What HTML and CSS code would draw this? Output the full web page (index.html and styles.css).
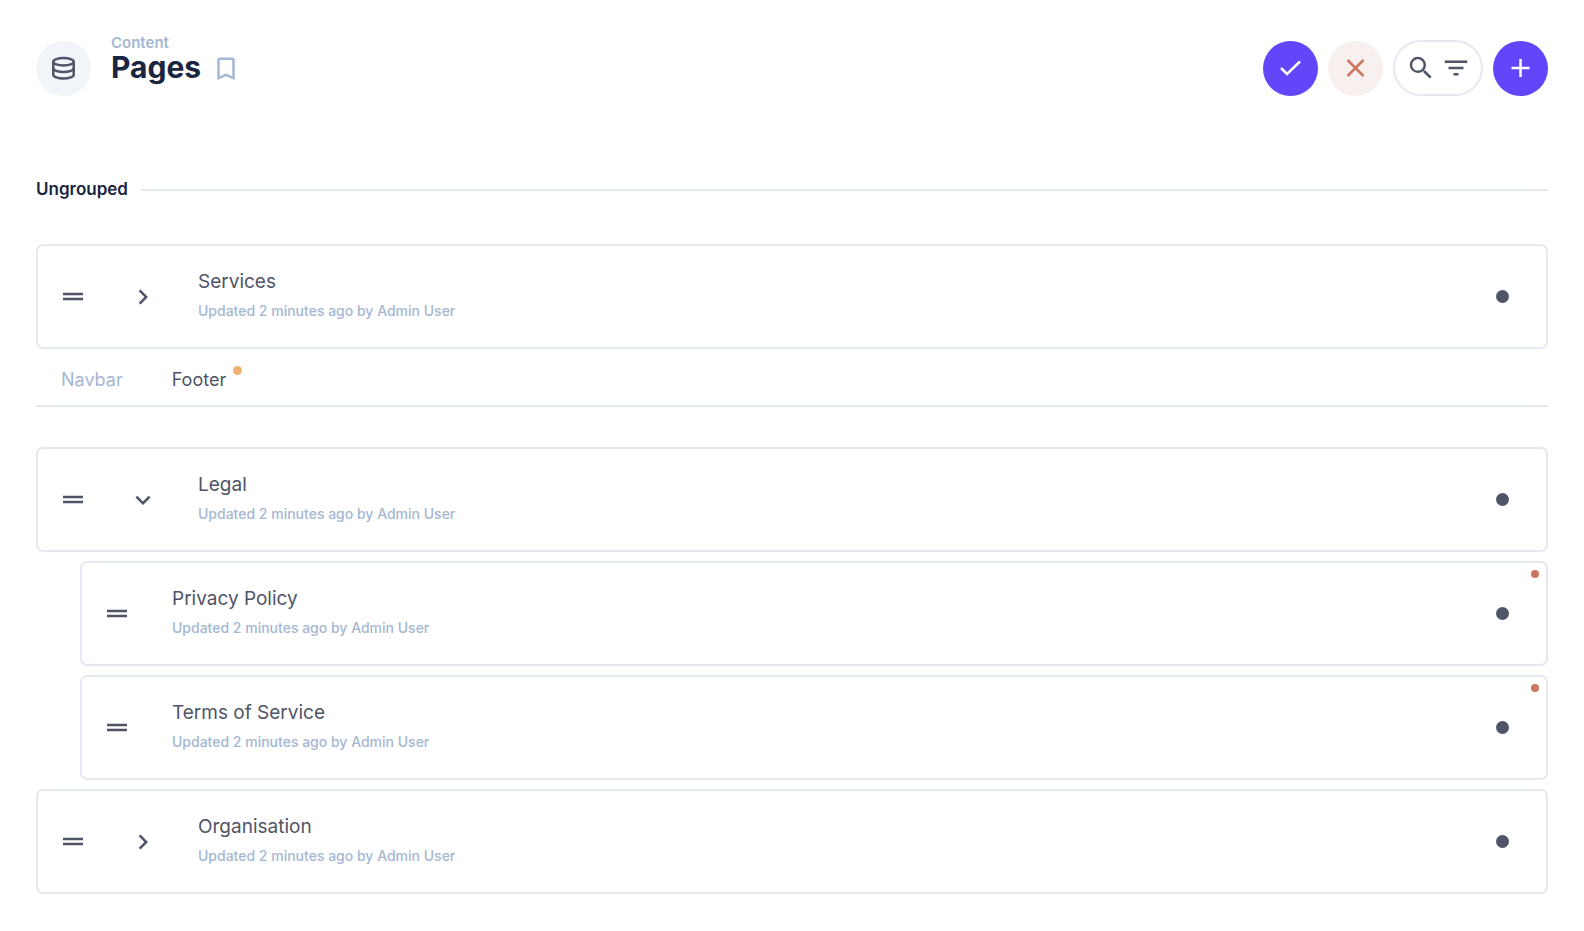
FILE: index.html
```html
<!DOCTYPE html>
<html lang="en">
<head>
  <meta charset="UTF-8">
  <meta name="viewport" content="width=device-width, initial-scale=1">
  <title>Pages</title>
  <link rel="stylesheet" href="styles.css">
</head>
<body>
  <!-- shared icons -->
  <svg class="sprite" aria-hidden="true">
    <symbol id="drag" viewBox="0 0 24 24"><path d="M20 8.500H4v2h16v-2zM4 14.500h16v-2H4v2z"/></symbol>
    <symbol id="chevron" viewBox="0 0 24 24"><path d="M10 6 8.59 7.41 13.17 12l-4.58 4.59L10 18l6-6z"/></symbol>
  </svg>

  <header class="page-header">
    <div class="page-icon">
      <svg viewBox="0 0 24 24" width="25" height="25" fill="none" stroke="currentColor" stroke-width="2.4">
        <ellipse cx="12" cy="5.500" rx="9.800" ry="3.500"/>
        <path d="M2.200 5.500v12.500c0 2 4.300 3.600 9.800 3.600s9.800-1.600 9.800-3.600V5.500"/>
        <path d="M2.200 11.700c0 2 4.300 3.600 9.800 3.600s9.800-1.600 9.800-3.600"/>
      </svg>
    </div>

    <div class="page-title">
      <a class="breadcrumb" href="#">Content</a>
      <div class="title-row">
        <h1>Pages</h1>
        <button class="bookmark" aria-label="Bookmark">
          <svg viewBox="0 0 24 24" width="30" height="30"><path d="M17 3.500H7c-1.100 0-2 .9-2 2v16l7-3 7 3v-16c0-1.100-.9-2-2-2zm0 15-5-2.180-5 2.180v-13h10v13z"/></svg>
        </button>
      </div>
    </div>

    <div class="actions">
      <button class="round primary" aria-label="Save">
        <svg viewBox="0 0 24 24" width="24" height="24"><path d="M2 12l6 6L21 5.500"/></svg>
      </button>
      <button class="round danger" aria-label="Discard">
        <svg viewBox="0 0 24 24" width="24" height="24"><path d="M3.500 4l16 16M19.500 4l-16 16"/></svg>
      </button>
      <div class="search-pill">
        <button aria-label="Search">
          <svg viewBox="0 0 24 24" width="30" height="30"><path d="M15.500 14h-.79l-.28-.27A6.470 6.470 0 0 0 16 9.500 6.500 6.500 0 1 0 9.500 16c1.610 0 3.090-.59 4.230-1.570l.27.28v.79l5 4.990L20.490 19l-4.990-5zm-6 0C7.010 14 5 11.990 5 9.500S7.010 5 9.500 5 14 7.010 14 9.500 11.990 14 9.500 14z"/></svg>
        </button>
        <button aria-label="Filter">
          <svg viewBox="0 0 24 24" width="30" height="30"><path d="M10 18h4v-2h-4v2zM3 6v2h18V6H3zm3 7h12v-2H6v2z"/></svg>
        </button>
      </div>
      <button class="round primary" aria-label="Create page">
        <svg viewBox="0 0 24 24" width="24" height="24"><path d="M11.500 3v18M2.500 12h18"/></svg>
      </button>
    </div>
  </header>

  <main>
    <h2 class="group-title">Ungrouped</h2>

    <article class="card">
      <button class="drag" aria-label="Move"><svg><use href="#drag"/></svg></button>
      <button class="toggle" aria-label="Expand"><svg><use href="#chevron"/></svg></button>
      <div class="info">
        <h3>Services</h3>
        <p>Updated 2 minutes ago by Admin User</p>
      </div>
      <span class="status"></span>
    </article>

    <nav class="tabs">
      <a href="#">Navbar</a>
      <a href="#" class="active">Footer</a>
    </nav>

    <article class="card">
      <button class="drag" aria-label="Move"><svg><use href="#drag"/></svg></button>
      <button class="toggle open" aria-label="Collapse"><svg><use href="#chevron"/></svg></button>
      <div class="info">
        <h3>Legal</h3>
        <p>Updated 2 minutes ago by Admin User</p>
      </div>
      <span class="status"></span>
    </article>

    <div class="children">
      <article class="card changed">
        <button class="drag" aria-label="Move"><svg><use href="#drag"/></svg></button>
        <div class="info">
          <h3>Privacy Policy</h3>
          <p>Updated 2 minutes ago by Admin User</p>
        </div>
        <span class="status"></span>
      </article>

      <article class="card changed">
        <button class="drag" aria-label="Move"><svg><use href="#drag"/></svg></button>
        <div class="info">
          <h3>Terms of Service</h3>
          <p>Updated 2 minutes ago by Admin User</p>
        </div>
        <span class="status"></span>
      </article>
    </div>

    <article class="card">
      <button class="drag" aria-label="Move"><svg><use href="#drag"/></svg></button>
      <button class="toggle" aria-label="Expand"><svg><use href="#chevron"/></svg></button>
      <div class="info">
        <h3>Organisation</h3>
        <p>Updated 2 minutes ago by Admin User</p>
      </div>
      <span class="status"></span>
    </article>
  </main>
</body>
</html>
```
FILE: styles.css
```css
* {
  box-sizing: border-box;
}

body {
  font-family: Inter, sans-serif;
  background: #fff;
  color: #4f5466;
  margin: 0;
  padding: 36px;
}

h1, h2, h3, p {
  margin: 0;
}

a {
  text-decoration: none;
}

button {
  display: flex;
  align-items: center;
  justify-content: center;
  padding: 0;
  border: 0;
  background: none;
  color: inherit;
  cursor: pointer;
}

svg {
  display: block;
  fill: currentColor;
}

.sprite {
  display: none;
}

/* header */
.page-header {
  display: flex;
  align-items: flex-start;
  padding-top: 4px;
  margin-bottom: 80px;
}

.page-icon {
  display: flex;
  align-items: center;
  justify-content: center;
  width: 55px;
  height: 55px;
  margin-top: 1px;
  border-radius: 50%;
  background: #f1f5fa;
}

.page-icon svg {
  fill: none;
}

.page-title {
  margin: -6px 0 0 20px;
}

.breadcrumb {
  display: block;
  font-size: 15px;
  font-weight: 600;
  line-height: 18px;
  color: #a5b7d2;
}

.title-row {
  display: flex;
  align-items: center;
  gap: 10px;
}

h1 {
  font-size: 30px;
  font-weight: 700;
  line-height: 30px;
  margin-bottom: 2px;
  color: #1a2540;
}

.bookmark {
  color: #a5b7d2;
}

.actions {
  display: flex;
  align-items: center;
  gap: 10px;
  margin-left: auto;
}

.round {
  width: 55px;
  height: 55px;
  border-radius: 50%;
}

.round svg {
  fill: none;
  stroke: currentColor;
  stroke-width: 2.5;
}

.primary {
  background: #6147f9;
  color: #fff;
}

.danger {
  background: #f8f0ee;
  color: #cb7662;
}

.search-pill {
  display: flex;
  align-items: center;
  gap: 5px;
  height: 56px;
  padding: 0 10px 0 11px;
  border: 2px solid #e4e9f1;
  border-radius: 28px;
}

/* groups */
.group-title {
  display: flex;
  align-items: center;
  gap: 13px;
  margin-bottom: 41px;
  font-size: 17px;
  font-weight: 600;
  line-height: 27px;
  color: #1a2540;
}

.group-title::after {
  content: "";
  flex: 1;
  height: 2px;
  background: #e4e9f1;
}

.tabs {
  display: flex;
  gap: 49px;
  height: 58px;
  padding: 0 25px;
  margin-bottom: 40px;
  border-bottom: 2px solid #e4e9f1;
  font-size: 18px;
  line-height: 62px;
}

.tabs a {
  position: relative;
  color: #a5b7d2;
}

.tabs .active {
  color: #4f5466;
}

.tabs .active::after {
  content: "";
  position: absolute;
  top: 17px;
  right: -16px;
  width: 9px;
  height: 9px;
  border-radius: 50%;
  background: #efb074;
}

/* cards */
.card {
  position: relative;
  display: flex;
  align-items: center;
  height: 105px;
  padding: 0 37px 0 20px;
  border: 2px solid #e4e9f1;
  border-radius: 7px;
}

.card + .children,
.children + .card,
.children .card + .card {
  margin-top: 9px;
}

.children {
  padding-left: 44px;
}

.drag svg,
.toggle svg {
  width: 30px;
  height: 30px;
}

.toggle {
  margin-left: 40px;
}

.toggle.open svg {
  transform: rotate(90deg);
}

.info {
  flex: 1;
  margin-left: 40px;
}

h3 {
  font-size: 19px;
  font-weight: 400;
  line-height: 30px;
}

.info p {
  margin-bottom: 2px;
  font-size: 14px;
  font-weight: 500;
  line-height: 28px;
  color: #a5b7d2;
}

.status {
  width: 13px;
  height: 13px;
  border-radius: 50%;
  background: #4f5466;
}

.changed::after {
  content: "";
  position: absolute;
  top: 7px;
  right: 7px;
  width: 8px;
  height: 8px;
  border-radius: 50%;
  background: #cb7662;
}
```
